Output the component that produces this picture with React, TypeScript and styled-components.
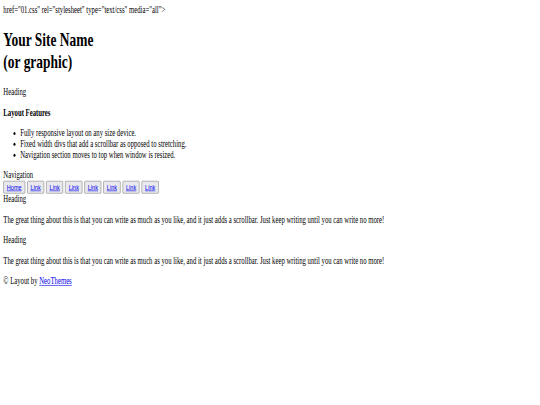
import React from "react";
import styled, { createGlobalStyle } from "styled-components";

// the reference is a plain unstyled page squeezed into a small window,
// so the whole page is laid out at its natural size and then scaled
const SCALE_X = 0.42;
const SCALE_Y = 0.605;

const GlobalStyle = createGlobalStyle`
  html, body {
    margin: 0;
    padding: 0;
    background: #fff;
    overflow: hidden;
  }
`;

const Frame = styled.div`
  width: 540px;
  height: 405px;
  overflow: hidden;
`;

const Page = styled.div`
  width: ${Math.floor(540 / SCALE_X)}px;
  box-sizing: border-box;
  padding: 8px;
  transform: scale(${SCALE_X}, ${SCALE_Y});
  transform-origin: 0 0;
  font-family: "Liberation Serif", "Times New Roman", serif;
  font-size: 16px;
  color: #000;

  a {
    color: #0000ee;
    text-decoration: underline;
  }
`;

const StrayText = styled.div``;

const SiteTitle = styled.h1`
  font-size: 32px;
  font-weight: bold;
  margin: 21.44px 0;
`;

const Para = styled.p<{ $bold?: boolean }>`
  margin: 16px 0;
  font-weight: ${(p) => (p.$bold ? "bold" : "normal")};
`;

const FeatureList = styled.ul`
  margin: 16px 0;
  padding-left: 40px;
  list-style: disc;
`;

const PlainLine = styled.div``;

const NavBar = styled.div`
  display: flex;
  gap: 5px;
`;

const NavButton = styled.button`
  font-family: "Liberation Sans", Arial, sans-serif;
  font-size: 13.333px;
  padding: 1px 7px;
  border: 1px solid #767676;
  border-radius: 2px;
  background: #e9e9ed;
  margin: 0;
  height: 21px;
  line-height: normal;
  cursor: pointer;
`;

const navItems = ["Home", "Link", "Link", "Link", "Link", "Link", "Link", "Link"];

const bodyText =
  "The great thing about this is that you can write as much as you like, and it just adds a scrollbar. Just keep writing until you can write no more!";

export default function App() {
  return (
    <>
      <GlobalStyle />
      <Frame>
        <Page>
          <StrayText>href="01.css" rel="stylesheet" type="text/css" media="all"&gt;</StrayText>
          <SiteTitle>
            Your Site Name
            <br />
            (or graphic)
          </SiteTitle>
          <Para>Heading</Para>
          <Para $bold>Layout Features</Para>
          <FeatureList>
            <li>Fully responsive layout on any size device.</li>
            <li>Fixed width divs that add a scrollbar as opposed to stretching.</li>
            <li>Navigation section moves to top when window is resized.</li>
          </FeatureList>
          <PlainLine>Navigation</PlainLine>
          <NavBar>
            {navItems.map((item, i) => (
              <NavButton key={i}>
                <a href="#">{item}</a>
              </NavButton>
            ))}
          </NavBar>
          <PlainLine>Heading</PlainLine>
          <Para>{bodyText}</Para>
          <PlainLine>Heading</PlainLine>
          <Para>{bodyText}</Para>
          <Para>
            © Layout by <a href="#">NeoThemes</a>
          </Para>
        </Page>
      </Frame>
    </>
  );
}
